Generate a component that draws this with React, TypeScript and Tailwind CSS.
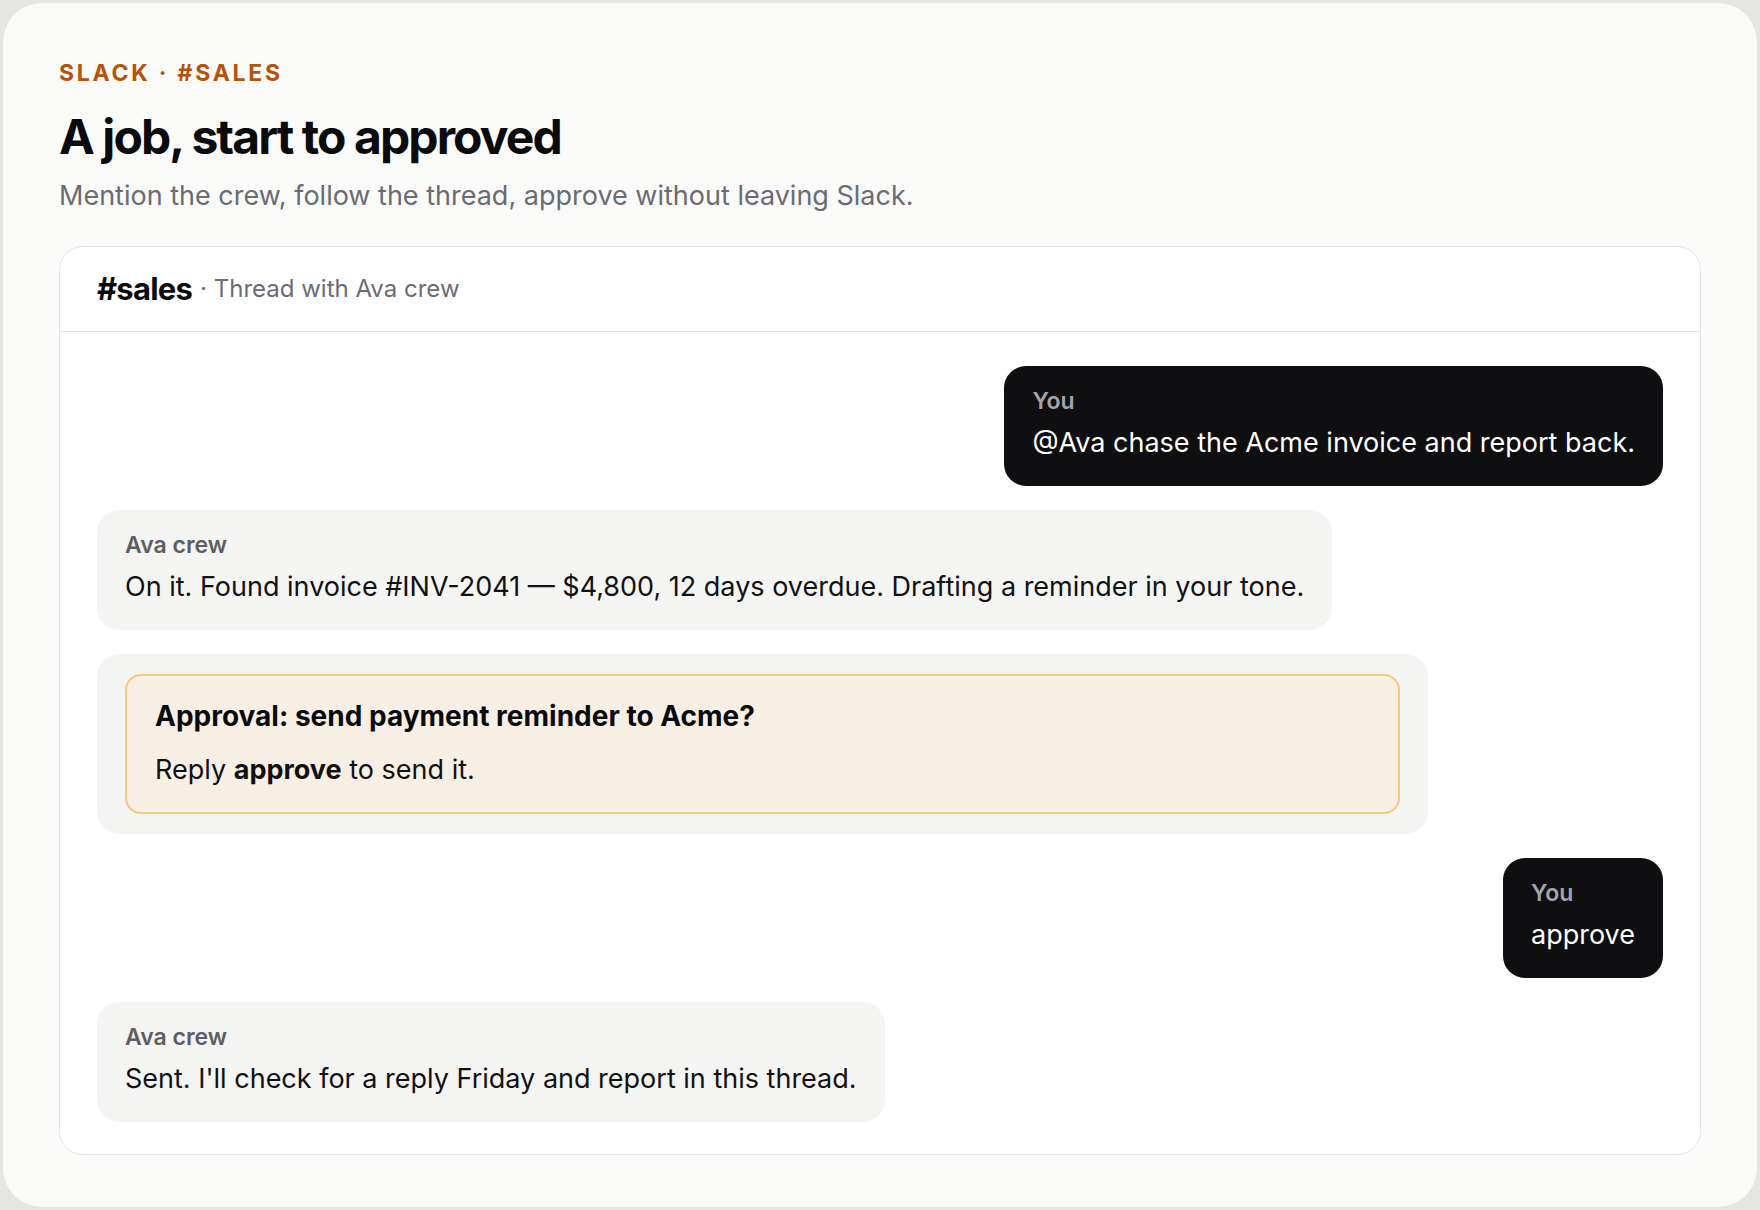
import type { ReactNode } from "react";

function YouBubble({ children }: { children: ReactNode }) {
  return (
    <div className="flex justify-end">
      <div className="rounded-[22px] bg-[#0f0f12] px-[28px] pt-[21px] pb-[25px] text-white">
        <p className="text-[23px] font-semibold leading-[28px] text-[#a3a3a8]">You</p>
        <p className="mt-[10px] text-[27px] leading-[36px]">{children}</p>
      </div>
    </div>
  );
}

function CrewBubble({ children }: { children: ReactNode }) {
  return (
    <div className="flex justify-start">
      <div className="rounded-[22px] bg-[#f4f4f2] px-[28px] pt-[21px] pb-[25px]">
        <p className="text-[23px] font-semibold leading-[28px] text-[#5e5e62]">Ava crew</p>
        <p className="mt-[10px] text-[27px] leading-[36px] text-[#111113]">{children}</p>
      </div>
    </div>
  );
}

export default function App() {
  return (
    <div className="min-h-screen bg-[#e6e6e4] p-[2px] font-['Inter',sans-serif]">
      <div className="h-[1206px] rounded-[40px] border border-[#e4e4e1] bg-[#fafaf9] px-[56px] pt-[55px]">
        <p className="text-[23px] font-bold uppercase leading-[30px] tracking-[0.12em] text-[#b45309]">
          Slack · #sales
        </p>
        <h1 className="mt-[20px] text-[48px] font-bold leading-[58px] tracking-[-0.04em] text-[#0b0b0d]">
          A job, start to approved
        </h1>
        <p className="mt-[12px] text-[27px] leading-[36px] text-[#6b6b73]">
          Mention the crew, follow the thread, approve without leaving Slack.
        </p>

        <div className="mt-[32px] rounded-[24px] border border-[#e4e4e4] bg-white">
          <div className="flex h-[85px] items-center gap-[8px] border-b border-[#e4e4e4] px-[37px]">
            <span className="text-[31px] font-bold tracking-tight text-[#0b0b0d]">#sales</span>
            <span className="text-[24px] text-[#6b6b73]">· Thread with Ava crew</span>
          </div>

          <div className="flex flex-col gap-[24px] px-[37px] pt-[34px] pb-[32px]">
            <YouBubble>@Ava chase the Acme invoice and report back.</YouBubble>
            <CrewBubble>
              On it. Found invoice #INV-2041 — $4,800, 12 days overdue. Drafting a reminder in your tone.
            </CrewBubble>

            <div className="w-[85%] rounded-[22px] bg-[#f4f4f2] px-[28px] py-[20px]">
              <div className="rounded-[16px] border-2 border-[#f2c97d] bg-[#f7efe4] px-[28px] pt-[22px] pb-[24px]">
                <p className="text-[28px] font-bold leading-[36px] text-[#0b0b0d]">
                  Approval: send payment reminder to Acme?
                </p>
                <p className="mt-[18px] text-[27px] leading-[36px] text-[#111113]">
                  Reply <span className="font-bold">approve</span> to send it.
                </p>
              </div>
            </div>

            <YouBubble>approve</YouBubble>
            <CrewBubble>Sent. I'll check for a reply Friday and report in this thread.</CrewBubble>
          </div>
        </div>
      </div>
    </div>
  );
}
